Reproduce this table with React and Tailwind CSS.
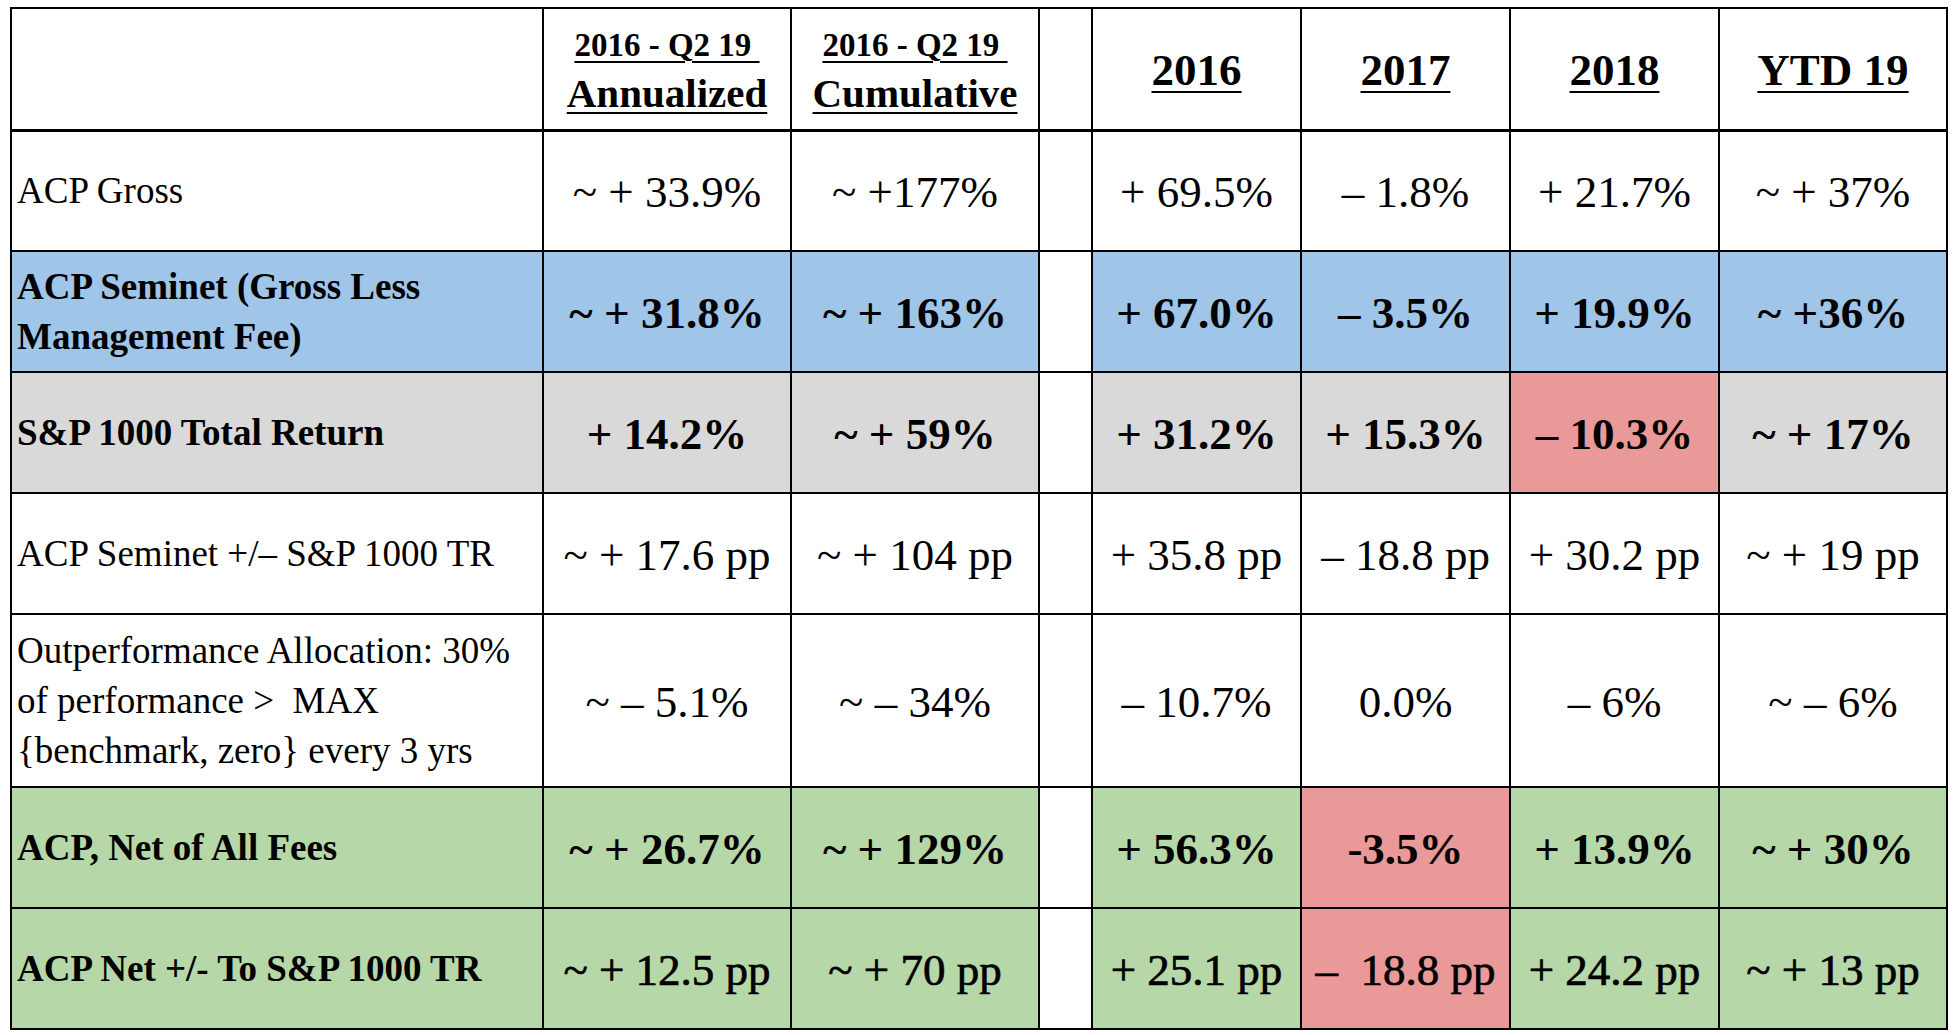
import React from "react";

const SERIF = "font-['Liberation_Serif','Times_New_Roman',serif]";

const WHITE = "bg-white";
const BLUE = "bg-[#9fc5e8]";
const GRAY = "bg-[#d9d9d9]";
const GREEN = "bg-[#b6d7a8]";
const RED = "bg-[#ea9999]";

// each value can be a string or { text, bg }
const rows = [
  {
    label: ["ACP Gross"],
    bg: WHITE,
    labelWeight: "font-normal",
    valueWeight: "font-normal",
    values: ["~ + 33.9%", "~ +177%", "+ 69.5%", "– 1.8%", "+ 21.7%", "~ + 37%"],
    h: "h-[121px]",
  },
  {
    label: ["ACP Seminet (Gross Less", "Management Fee)"],
    bg: BLUE,
    labelWeight: "font-bold",
    valueWeight: "font-bold",
    values: ["~ + 31.8%", "~ + 163%", "+ 67.0%", "– 3.5%", "+ 19.9%", "~ +36%"],
    h: "h-[121px]",
  },
  {
    label: ["S&P 1000 Total Return"],
    bg: GRAY,
    labelWeight: "font-bold",
    valueWeight: "font-bold",
    values: ["+ 14.2%", "~ + 59%", "+ 31.2%", "+ 15.3%", { text: "– 10.3%", bg: RED }, "~ + 17%"],
    h: "h-[121px]",
  },
  {
    label: ["ACP Seminet +/– S&P 1000 TR"],
    bg: WHITE,
    labelWeight: "font-normal",
    valueWeight: "font-normal",
    values: ["~ + 17.6 pp", "~ + 104 pp", "+ 35.8 pp", "– 18.8 pp", "+ 30.2 pp", "~ + 19 pp"],
    h: "h-[121px]",
  },
  {
    label: ["Outperformance Allocation: 30%", "of performance >  MAX", "{benchmark, zero} every 3 yrs"],
    bg: WHITE,
    labelWeight: "font-normal",
    valueWeight: "font-normal",
    values: ["~ – 5.1%", "~ – 34%", "– 10.7%", "0.0%", "– 6%", "~ – 6%"],
    h: "h-[173px]",
  },
  {
    label: ["ACP, Net of All Fees"],
    bg: GREEN,
    labelWeight: "font-bold",
    valueWeight: "font-bold",
    values: ["~ + 26.7%", "~ + 129%", "+ 56.3%", { text: "-3.5%", bg: RED }, "+ 13.9%", "~ + 30%"],
    h: "h-[121px]",
  },
  {
    label: ["ACP Net +/- To S&P 1000 TR"],
    bg: GREEN,
    labelWeight: "font-bold",
    valueWeight: "font-normal [-webkit-text-stroke:0.7px_black]",
    values: ["~ + 12.5 pp", "~ + 70 pp", "+ 25.1 pp", { text: "–  18.8 pp", bg: RED }, "+ 24.2 pp", "~ + 13 pp"],
    h: "h-[121px]",
  },
];

const cell = "border-2 border-black p-0";

function ValueCell({ value, bg, weight }) {
  const text = typeof value === "string" ? value : value.text;
  const cellBg = typeof value === "string" ? bg : value.bg;
  return (
    <td className={`${cell} ${cellBg} text-center align-middle`}>
      <span className={`whitespace-pre text-[45px] leading-none ${weight} relative top-[2px]`}>{text}</span>
    </td>
  );
}

export default function App() {
  return (
    <div className={`w-[1956px] h-[1035px] bg-white pl-[10px] pt-[7px] text-black ${SERIF}`}>
      <table className="table-fixed border-collapse w-[1936px]">
        <colgroup>
          <col className="w-[532px]" />
          <col className="w-[248px]" />
          <col className="w-[248px]" />
          <col className="w-[53px]" />
          <col className="w-[209px]" />
          <col className="w-[209px]" />
          <col className="w-[209px]" />
          <col className="w-[228px]" />
        </colgroup>
        <thead>
          <tr className="h-[122px]">
            <th className={`${cell} border-b-[3px]`} />
            {["Annualized", "Cumulative"].map((sub) => (
              <th key={sub} className={`${cell} border-b-[3px] text-center align-middle font-bold`}>
                <div className="flex flex-col items-center pt-[4px]">
                  <span className="underline decoration-2 underline-offset-[5px] text-[33px] leading-[44px] whitespace-pre">
                    {"2016 - Q2 19\u00a0"}
                  </span>
                  <span className="underline decoration-2 underline-offset-[5px] text-[41px] leading-[52px]">
                    {sub}
                  </span>
                </div>
              </th>
            ))}
            <th className={`${cell} border-b-[3px]`} />
            {["2016", "2017", "2018", "YTD 19"].map((y) => (
              <th key={y} className={`${cell} border-b-[3px] text-center align-middle font-bold`}>
                <span className="underline decoration-2 underline-offset-[6px] text-[45px] leading-none relative top-[2px]">
                  {y}
                </span>
              </th>
            ))}
          </tr>
        </thead>
        <tbody>
          {rows.map((row, i) => (
            <tr key={i} className={row.h}>
              <td className={`${cell} ${row.bg} align-middle pl-[5px]`}>
                <div className={`text-[37px] leading-[50px] ${row.labelWeight}`}>
                  {row.label.map((line, j) => (
                    <div key={j} className="whitespace-pre">
                      {line}
                    </div>
                  ))}
                </div>
              </td>
              <ValueCell value={row.values[0]} bg={row.bg} weight={row.valueWeight} />
              <ValueCell value={row.values[1]} bg={row.bg} weight={row.valueWeight} />
              <td className={`${cell} bg-white`} />
              {row.values.slice(2).map((v, k) => (
                <ValueCell key={k} value={v} bg={row.bg} weight={row.valueWeight} />
              ))}
            </tr>
          ))}
        </tbody>
      </table>
    </div>
  );
}
